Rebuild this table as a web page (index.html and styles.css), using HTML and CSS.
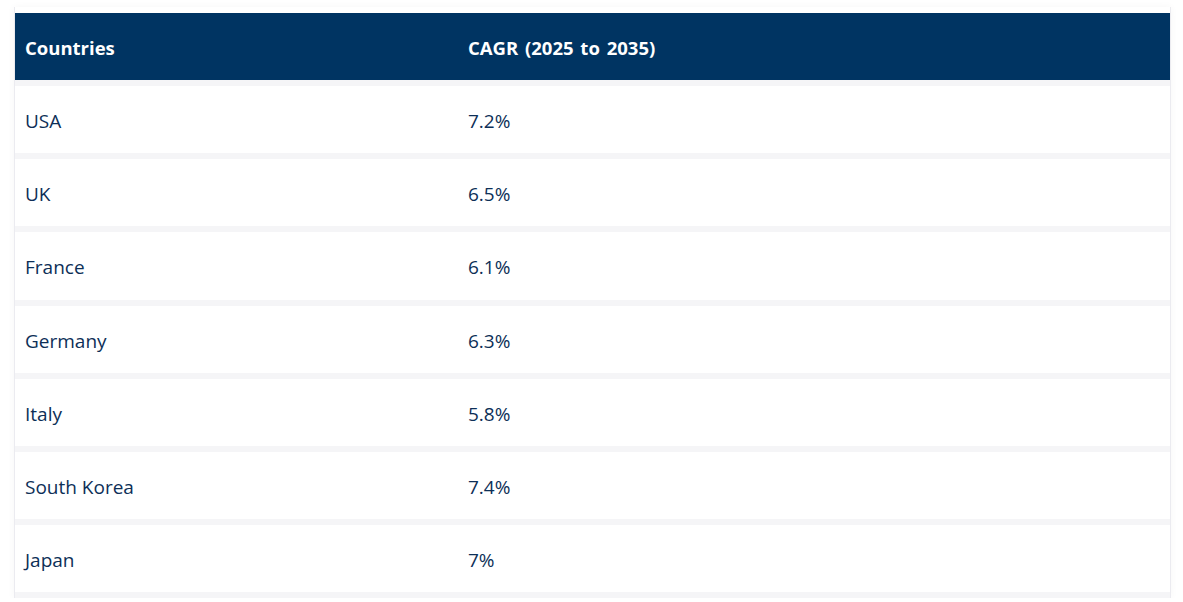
FILE: index.html
```html
<!DOCTYPE html>
<html lang="en">
<head>
<meta charset="utf-8">
<title>CAGR by Country</title>
<link rel="stylesheet" href="styles.css">
</head>
<body>
<div class="wrap">
  <table class="cagr">
    <thead>
      <tr><th class="c1">Countries</th><th>CAGR (2025 to 2035)</th></tr>
    </thead>
    <tbody>
      <tr><td class="c1">USA</td><td>7.2%</td></tr>
      <tr><td class="c1">UK</td><td>6.5%</td></tr>
      <tr><td class="c1">France</td><td>6.1%</td></tr>
      <tr><td class="c1">Germany</td><td>6.3%</td></tr>
      <tr><td class="c1">Italy</td><td>5.8%</td></tr>
      <tr><td class="c1">South Korea</td><td>7.4%</td></tr>
      <tr><td class="c1">Japan</td><td>7%</td></tr>
    </tbody>
  </table>
</div>
</body>
</html>
```
FILE: styles.css
```css
html, body {
  margin: 0;
  padding: 0;
  background: #ffffff;
}
body {
  padding: 7px 12px 0 14px;
  font-family: "Open Sans", "Noto Sans", sans-serif;
}
.wrap {
  border-left: 1px solid #ebebf0;
  border-right: 1px solid #ebebf0;
  box-shadow: 0 0 8px rgba(0, 0, 0, 0.04);
  padding-top: 6px;
  background: #ffffff;
}
.cagr {
  width: 100%;
  border-collapse: collapse;
  table-layout: fixed;
}
.cagr th, .cagr td {
  text-align: left;
  padding: 2px 10px 0;
  border-bottom: 6px solid #f5f5f7;
}
.cagr th {
  background: #003462;
  color: #ffffff;
  font-weight: 700;
  font-size: 18.5px;
  word-spacing: 2px;
  height: 65px;
}
.cagr td {
  color: #0d2f57;
  font-size: 19px;
  padding-top: 3px;
  height: 64.2px;
}
.cagr .c1 {
  width: 423px;
}
```
